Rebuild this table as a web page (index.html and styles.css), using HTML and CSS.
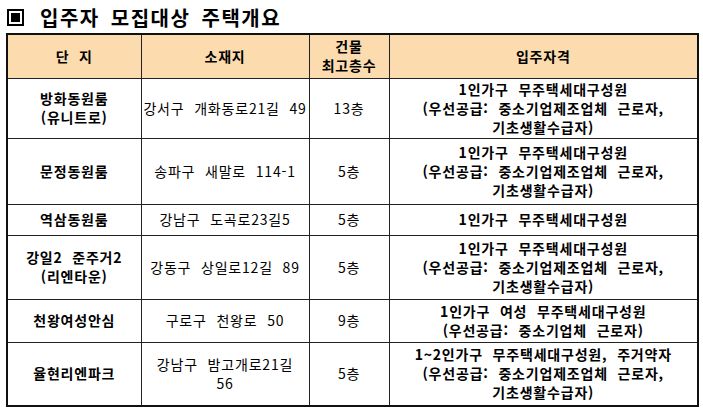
FILE: index.html
```html
<!DOCTYPE html>
<html lang="ko">
<head>
<meta charset="utf-8">
<link rel="stylesheet" href="styles.css">
</head>
<body>
<div class="page">
  <h1 class="title"><span class="mark"><span class="mark-inner"></span></span><span class="title-text">입주자 모집대상 주택개요</span></h1>
  <table class="grid">
    <colgroup>
      <col class="c1"><col class="c2"><col class="c3"><col class="c4">
    </colgroup>
    <thead>
      <tr class="h">
        <th>단 지</th>
        <th>소재지</th>
        <th>건물<br>최고층수</th>
        <th>입주자격</th>
      </tr>
    </thead>
    <tbody>
      <tr class="r1">
        <td class="name">방화동원룸<br>(유니트로)</td>
        <td>강서구 개화동로21길 49</td>
        <td>13층</td>
        <td class="qual">1인가구 무주택세대구성원<br>(우선공급: 중소기업제조업체 근로자,<br>기초생활수급자)</td>
      </tr>
      <tr class="r2">
        <td class="name">문정동원룸</td>
        <td>송파구 새말로 114-1</td>
        <td>5층</td>
        <td class="qual">1인가구 무주택세대구성원<br>(우선공급: 중소기업제조업체 근로자,<br>기초생활수급자)</td>
      </tr>
      <tr class="r3">
        <td class="name">역삼동원룸</td>
        <td>강남구 도곡로23길5</td>
        <td>5층</td>
        <td class="qual">1인가구 무주택세대구성원</td>
      </tr>
      <tr class="r4">
        <td class="name">강일2 준주거2<br>(리엔타운)</td>
        <td>강동구 상일로12길 89</td>
        <td>5층</td>
        <td class="qual">1인가구 무주택세대구성원<br>(우선공급: 중소기업제조업체 근로자,<br>기초생활수급자)</td>
      </tr>
      <tr class="r5">
        <td class="name">천왕여성안심</td>
        <td>구로구 천왕로 50</td>
        <td>9층</td>
        <td class="qual">1인가구 여성 무주택세대구성원<br>(우선공급: 중소기업체 근로자)</td>
      </tr>
      <tr class="r6">
        <td class="name">율현리엔파크</td>
        <td>강남구 밤고개로21길<br>56</td>
        <td>5층</td>
        <td class="qual">1~2인가구 무주택세대구성원, 주거약자<br>(우선공급: 중소기업제조업체 근로자,<br>기초생활수급자)</td>
      </tr>
    </tbody>
  </table>
</div>
</body>
</html>
```

FILE: styles.css
```css
html, body {
  margin: 0;
  padding: 0;
  background: #ffffff;
}
body {
  font-family: "Noto Sans CJK KR", "Noto Sans", sans-serif;
  color: #000;
}
.page {
  padding: 4px 0 0 6px;
  width: 691px;
}
.title {
  display: flex;
  align-items: center;
  margin: 0;
  height: 26px;
  font-size: 20px;
  font-weight: bold;
  letter-spacing: 1.5px;
  word-spacing: 4px;
}
.mark {
  box-sizing: border-box;
  width: 17px;
  height: 17px;
  border: 2px solid #000;
  padding: 2px;
  margin: 0 16px 0 1px;
  display: flex;
}
.mark-inner {
  flex: 1;
  background: #000;
}
.grid {
  margin-top: 3px;
  border-collapse: collapse;
  border: 2px solid #111;
  table-layout: fixed;
  width: 691px;
  font-size: 14px;
  line-height: 19px;
  letter-spacing: 0.8px;
  word-spacing: 5px;
}
.c1 { width: 134px; }
.c2 { width: 168px; }
.c3 { width: 80px; }
.c4 { width: 309px; }
th, td {
  border: 1px solid #222;
  text-align: center;
  vertical-align: middle;
  padding: 0;
  white-space: nowrap;
}
th {
  background: #fcdcae;
  font-weight: bold;
}
.h { height: 44px; }
.name, .qual { font-weight: bold; }
.r1 { height: 60px; }
.r2 { height: 66px; }
.r3 { height: 31px; }
.r4 { height: 64px; }
.r5 { height: 43px; }
.r6 { height: 64px; }
```
